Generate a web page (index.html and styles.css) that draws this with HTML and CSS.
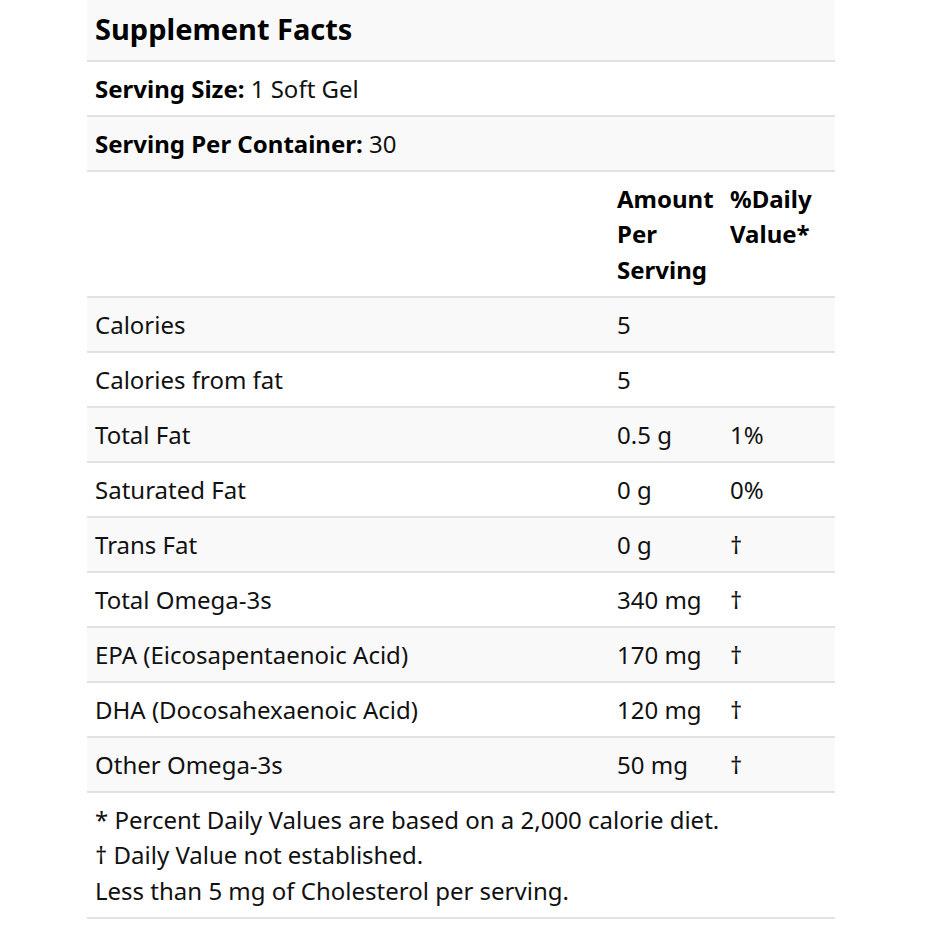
FILE: index.html
```html
<!DOCTYPE html>
<html lang="en">
<head>
<meta charset="utf-8">
<title>Supplement Facts</title>
<link rel="stylesheet" href="styles.css">
</head>
<body>
<div class="page">
<table class="facts">
  <colgroup>
    <col class="c-name">
    <col class="c-amt">
    <col class="c-dv">
  </colgroup>
  <tbody>
    <tr class="title-row"><td colspan="3"><h1>Supplement Facts</h1></td></tr>
    <tr><td colspan="3"><b>Serving Size:</b> 1 Soft Gel</td></tr>
    <tr><td colspan="3"><b>Serving Per Container:</b> 30</td></tr>
    <tr class="head"><td></td><td><b>Amount Per Serving</b></td><td><b>%Daily Value*</b></td></tr>
    <tr><td>Calories</td><td>5</td><td></td></tr>
    <tr><td>Calories from fat</td><td>5</td><td></td></tr>
    <tr><td>Total Fat</td><td>0.5 g</td><td>1%</td></tr>
    <tr><td>Saturated Fat</td><td>0 g</td><td>0%</td></tr>
    <tr><td>Trans Fat</td><td>0 g</td><td>†</td></tr>
    <tr><td>Total Omega-3s</td><td>340 mg</td><td>†</td></tr>
    <tr><td>EPA (Eicosapentaenoic Acid)</td><td>170 mg</td><td>†</td></tr>
    <tr><td>DHA (Docosahexaenoic Acid)</td><td>120 mg</td><td>†</td></tr>
    <tr><td>Other Omega-3s</td><td>50 mg</td><td>†</td></tr>
    <tr class="foot"><td colspan="3">* Percent Daily Values are based on a 2,000 calorie diet.<br>† Daily Value not established.<br>Less than 5 mg of Cholesterol per serving.</td></tr>
  </tbody>
</table>
</div>
</body>
</html>
```

FILE: styles.css
```css
html, body {
  margin: 0;
  padding: 0;
  background: #ffffff;
}
.page {
  padding-left: 87px;
}
.facts {
  width: 748px;
  border-collapse: collapse;
  table-layout: fixed;
  font-family: "Noto Sans", "Open Sans", sans-serif;
  font-size: 24px;
  line-height: 35.5px;
  color: #111;
}
.c-name { width: 522px; }
.c-amt { width: 113px; }
.c-dv { width: 113px; }
.facts td {
  padding: 8.75px 8px;
  vertical-align: top;
  border-bottom: 2px solid #e2e2e2;
}
.facts b { font-weight: 700; color: #000; }
.facts tbody tr:nth-child(odd) td { background: #f9f9f9; }
.facts tbody tr:nth-child(even) td { background: #ffffff; }
.title-row td {
  padding-top: 10px;
  padding-bottom: 12px;
}
.title-row h1 {
  margin: 0;
  font-size: 29px;
  line-height: 38px;
  font-weight: 700;
  color: #000;
}
```
